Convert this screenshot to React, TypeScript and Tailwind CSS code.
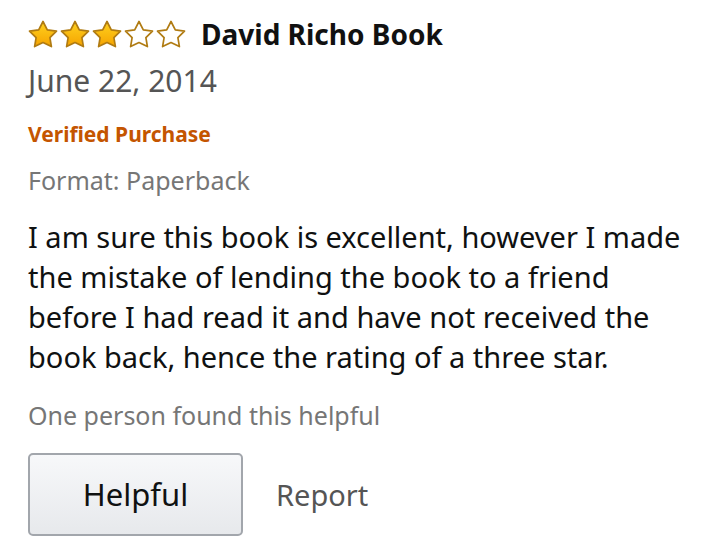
import React from "react";

const font = { fontFamily: "'Noto Sans', 'Liberation Sans', sans-serif" };

function Star({ filled }: { filled: boolean }) {
  return (
    <svg width="30" height="28" viewBox="0 0 30 28" className="shrink-0">
      <defs>
        <linearGradient id="starFill" x1="0" y1="0" x2="0" y2="1">
          <stop offset="0" stopColor="#ffd21f" />
          <stop offset="1" stopColor="#f5a300" />
        </linearGradient>
      </defs>
      <polygon
        points="15,1.5 19.3,9.8 28.5,11.1 21.9,17.7 23.4,26.6 15,22.5 6.6,26.6 8.1,17.7 1.5,11.1 10.7,9.8"
        fill={filled ? "url(#starFill)" : "#ffffff"}
        stroke="#b07b12"
        strokeWidth="1.7"
        strokeLinejoin="round"
      />
    </svg>
  );
}

export default function App() {
  const rating = 3;
  return (
    <div className="w-[720px] h-[554px] bg-white px-[28px] pt-[18px]" style={font}>
      {/* Header */}
      <div className="flex items-center">
        <div className="flex gap-[2px]">
          {[0, 1, 2, 3, 4].map((i) => (
            <Star key={i} filled={i < rating} />
          ))}
        </div>
        <h2 className="ml-[15px] text-[28px] leading-[32px] font-bold text-[#111111]">
          David Richo Book
        </h2>
      </div>

      <p className="mt-[14px] text-[30px] leading-[34px] text-[#555555]">June 22, 2014</p>

      <p className="mt-[23px] text-[21px] leading-[26px] font-bold text-[#c45500]">
        Verified Purchase
      </p>

      <p className="mt-[18px] text-[25px] leading-[30px] text-[#767676]">Format: Paperback</p>

      <p className="mt-[22px] text-[29px] leading-[40px] text-[#0f1111]">
        I am sure this book is excellent, however I made the mistake of lending the book to a
        friend before I had read it and have not received the book back, hence the rating of a
        three star.
      </p>

      <p className="mt-[23px] text-[25px] leading-[30px] text-[#767676]">
        One person found this helpful
      </p>

      <div className="mt-[23px] flex items-center">
        <button
          type="button"
          className="w-[215px] h-[83px] rounded-[5px] border-2 border-[#a2a6ac] bg-gradient-to-b from-[#f7f8fa] to-[#e7e9ec] text-[31px] text-[#0f1111]"
        >
          Helpful
        </button>
        <span className="ml-[33px] text-[29px] text-[#555555]">Report</span>
      </div>
    </div>
  );
}
